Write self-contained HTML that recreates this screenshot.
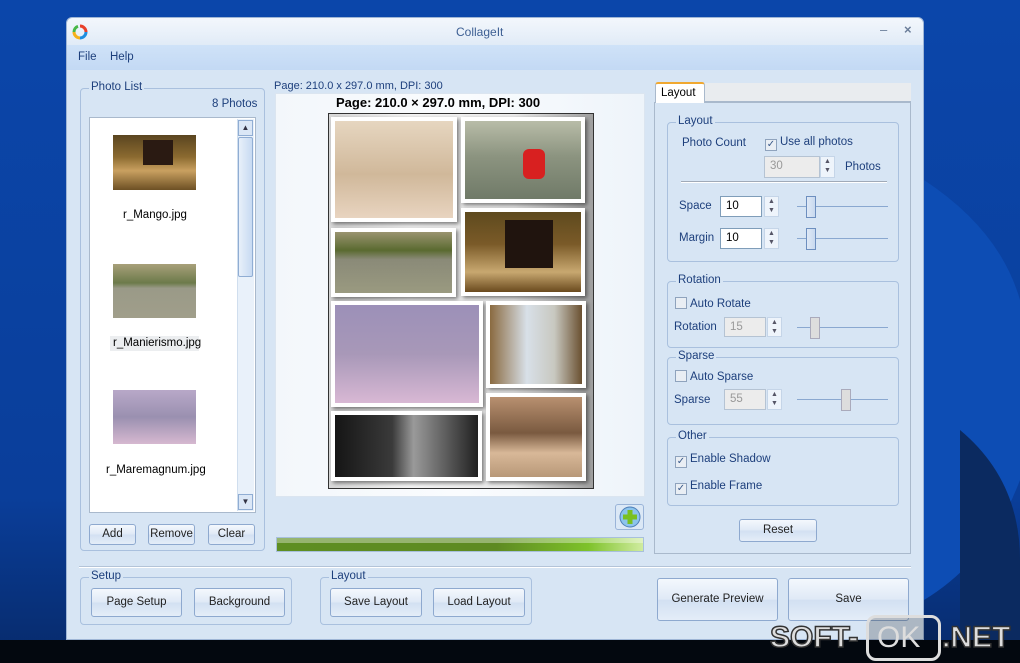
<!DOCTYPE html>
<html><head><meta charset="utf-8"><style>
*{margin:0;padding:0;box-sizing:border-box}
body{width:1020px;height:663px;overflow:hidden;position:relative;font-family:"Liberation Sans",sans-serif;font-size:11.5px;background:#0a3f9e}
.a{position:absolute}
.lbl{color:#1d3f7c}
.btn{position:absolute;border:1px solid #8ea9cf;border-radius:3px;background:linear-gradient(#f4f8fd,#dfe9f6 50%,#d2e0f2 51%,#e4edf8);color:#222;text-align:center;font-size:11.5px}
.grp{position:absolute;border:1px solid #a9c0de;border-radius:4px}
.gt{position:absolute;top:-8px;left:8px;background:#d7e5f4;padding:0 2px;color:#1d3f7c;font-size:11.5px}
.in{position:absolute;background:#fff;border:1px solid #7f9db9;font-size:11.5px;padding:3px 0 0 5px;color:#000}
.dis{background:#ececec;color:#999;border-color:#b5c3d3}
.spin{position:absolute;width:15px;border:1px solid #c5d5e8;background:#eef4fb;font-size:7px;color:#556;text-align:center;line-height:9px}
.cb{display:inline-block;width:12px;height:12px;border:1px solid #8fa3bd;background:#e9eef4;vertical-align:-2px;margin-right:3px;font-size:10px;line-height:10px;text-align:center;color:#3a5a8a}
.trk{position:absolute;height:1px;background:#8aa8d0}
.thumb{position:absolute;width:10px;height:22px;border:1px solid #6d8fbf;background:linear-gradient(90deg,#dfe9f6,#c8d9ef)}
.ph{position:absolute;border:4px solid #fff;box-shadow:2px 2px 4px rgba(0,0,0,.5)}
</style></head><body>
<svg class="a" style="left:0;top:0" width="1020" height="663">
<defs><linearGradient id="bg" x1="0" y1="0" x2="0" y2="1"><stop offset="0" stop-color="#0b46aa"/><stop offset=".75" stop-color="#0a3e9a"/><stop offset="1" stop-color="#072a6a"/></linearGradient></defs>
<rect width="1020" height="663" fill="url(#bg)"/>
<path d="M924 180 Q1000 230 1020 300 L1020 480 Q990 560 924 600Z" fill="#0d4db4"/>
<path d="M960 430 Q1020 480 1020 560 L1020 663 L960 663Z" fill="#0b2a60"/>
<rect x="0" y="640" width="1020" height="23" fill="#03080f"/>
</svg>
<div class="a" style="left:66px;top:17px;width:858px;height:623px;background:#d7e5f4;border:1px solid #9fb6d6;border-radius:6px 6px 0 0"></div>
<div class="a" style="left:67px;top:18px;width:856px;height:27px;border-radius:6px 6px 0 0;background:linear-gradient(#f3f7fc,#e1ebf7)"></div>
<svg class="a" style="left:72px;top:24px" width="16" height="16" viewBox="0 0 16 16"><path d="M8 2 A6 6 0 0 1 14 8" stroke="#e8402a" stroke-width="3" fill="none"/><path d="M14 8 A6 6 0 0 1 8 14" stroke="#1f8ee0" stroke-width="3" fill="none"/><path d="M8 14 A6 6 0 0 1 2 8" stroke="#f5b11a" stroke-width="3" fill="none"/><path d="M2 8 A6 6 0 0 1 6 2.3" stroke="#48b848" stroke-width="3" fill="none"/></svg>
<div class="a" style="left:456px;top:25px;color:#3d5f93;font-size:12px">CollageIt</div>
<div class="a" style="left:880px;top:22px;color:#6a7d99;font-size:13px">–</div>
<div class="a" style="left:904px;top:22px;color:#6a7d99;font-size:13px;font-weight:bold">×</div>
<div class="a" style="left:67px;top:45px;width:856px;height:25px;background:linear-gradient(#cfe2f8,#c3d9f4)"></div>
<div class="a lbl" style="left:78px;top:51px">File</div>
<div class="a lbl" style="left:110px;top:51px">Help</div>

<div class="grp" style="left:80px;top:88px;width:185px;height:463px"><span class="gt">Photo List</span></div>
<div class="a lbl" style="left:212px;top:98px">8 Photos</div>
<div class="a" style="left:89px;top:117px;width:167px;height:396px;background:#fff;border:1px solid #a9b9cc"></div>
<div class="a" style="left:237px;top:119px;width:17px;height:392px;background:#e9f1fa;border-left:1px solid #d0deee"></div>
<div class="a" style="left:238px;top:120px;width:15px;height:16px;border:1px solid #90add3;background:#dbe7f6;font-size:8px;text-align:center;color:#334;line-height:14px">▲</div>
<div class="a" style="left:238px;top:137px;width:15px;height:140px;border:1px solid #90add3;border-radius:2px;background:linear-gradient(90deg,#e8f0fa,#c7daf2)"></div>
<div class="a" style="left:238px;top:494px;width:15px;height:16px;border:1px solid #90add3;background:#dbe7f6;font-size:8px;text-align:center;color:#334;line-height:14px">▼</div>
<div class="a" style="left:113px;top:135px;width:83px;height:55px;background:linear-gradient(#5a4520,#8b6a30 40%,#c9a060 65%,#6d5024)"></div>
<div class="a" style="left:143px;top:140px;width:30px;height:25px;background:#2a1a12"></div>
<div class="a" style="left:123px;top:209px;color:#000">r_Mango.jpg</div>
<div class="a" style="left:113px;top:264px;width:83px;height:54px;background:linear-gradient(#a8a07a,#6c7a4a 35%,#9a9a88 45%,#a09e8a)"></div>
<div class="a" style="left:110px;top:336px;width:89px;height:15px;background:#eceef0"></div>
<div class="a" style="left:113px;top:337px;color:#000">r_Manierismo.jpg</div>
<div class="a" style="left:113px;top:390px;width:83px;height:54px;background:linear-gradient(#b8a8c8,#9a90b0 50%,#d6b8d0)"></div>
<div class="a" style="left:106px;top:464px;color:#000">r_Maremagnum.jpg</div>
<div class="btn" style="left:89px;top:524px;width:47px;height:21px;line-height:19px">Add</div>
<div class="btn" style="left:148px;top:524px;width:47px;height:21px;line-height:19px">Remove</div>
<div class="btn" style="left:208px;top:524px;width:47px;height:21px;line-height:19px">Clear</div>

<div class="a lbl" style="left:274px;top:80px;font-size:11px">Page: 210.0 x 297.0 mm, DPI: 300</div>
<div class="a" style="left:275px;top:93px;width:370px;height:404px;background:linear-gradient(90deg,#f3f7fb,#fafcfe 50%,#eef4fa);border:1px solid #dbe5f0"></div>
<div class="a" style="left:336px;top:95px;font-weight:bold;font-size:13px;color:#000">Page: 210.0 × 297.0 mm, DPI: 300</div>
<div class="a" style="left:328px;top:113px;width:266px;height:376px;border:1px solid #333;background:linear-gradient(90deg,#d8d8d8,#f4f4f4 30%,#ececec 70%,#a0a0a0)"></div>
<div class="ph" style="left:331px;top:117px;width:126px;height:105px;background:linear-gradient(#e6d6c0,#d0b89a 55%,#e8d4c0)"></div>
<div class="ph" style="left:461px;top:117px;width:124px;height:86px;background:linear-gradient(#b8bca8,#8c9480 45%,#707a68)"><div class="a" style="left:58px;top:28px;width:22px;height:30px;background:#d82020;border-radius:6px"></div></div>
<div class="ph" style="left:331px;top:228px;width:125px;height:69px;background:linear-gradient(#9a9470,#5a6a30 30%,#8a8a78 45%,#9a9a80)"></div>
<div class="ph" style="left:461px;top:208px;width:124px;height:88px;background:linear-gradient(#5e4a1e,#7a5a28 40%,#c8a870 75%,#6a4a1e)"><div class="a" style="left:40px;top:8px;width:48px;height:48px;background:#20140e"></div></div>
<div class="ph" style="left:331px;top:301px;width:152px;height:106px;background:linear-gradient(#9c90b8,#a898b8 50%,#d8b8d4)"></div>
<div class="ph" style="left:486px;top:301px;width:100px;height:87px;background:linear-gradient(90deg,#8a6a40,#d8e0e8 40%,#c8c8c0 70%,#6a5030)"></div>
<div class="ph" style="left:331px;top:411px;width:151px;height:70px;background:linear-gradient(90deg,#151515,#3a3a3a 40%,#9a9a9a 55%,#202020)"></div>
<div class="ph" style="left:486px;top:393px;width:100px;height:88px;background:linear-gradient(#b89070,#7a5a40 45%,#d8b898 70%,#b89878)"></div>
<div class="a" style="left:615px;top:504px;width:29px;height:26px;border:1px solid #9ab4d8;border-radius:3px;background:#dbe8f6"></div>
<svg class="a" style="left:619px;top:506px" width="22" height="22" viewBox="0 0 22 22"><circle cx="11" cy="11" r="10" fill="#8cc4ec" stroke="#4f7fb8"/><path d="M11 4v14M4 11h14" stroke="#7ac020" stroke-width="5"/></svg>
<div class="a" style="left:276px;top:537px;width:368px;height:15px;border:1px solid #a8c0dc;background:linear-gradient(90deg,#5e8e22,#5e8a22 60%,#7ec22a 85%,#d0eca0)"></div>
<div class="a" style="left:277px;top:538px;width:366px;height:5px;background:rgba(255,255,255,.35)"></div>

<div class="a" style="left:654px;top:102px;width:257px;height:452px;border:1px solid #a9b9cc;background:#d7e5f4"></div>
<div class="a" style="left:704px;top:83px;width:207px;height:19px;background:#e9ecef;border-bottom:1px solid #a9b9cc"></div>
<div class="a" style="left:655px;top:82px;width:50px;height:21px;background:#fff;border:1px solid #a9b9cc;border-bottom:none;border-top:2px solid #f0a830;border-radius:3px 3px 0 0;padding:3px 0 0 5px;font-size:11.5px;color:#000">Layout</div>
<div class="grp" style="left:667px;top:122px;width:232px;height:140px"><span class="gt">Layout</span></div>
<div class="a lbl" style="left:682px;top:137px">Photo Count</div>
<div class="a lbl" style="left:765px;top:136px"><span class="cb">✓</span>Use all photos</div>
<div class="in dis" style="left:764px;top:156px;width:56px;height:22px">30</div>
<div class="spin" style="left:820px;top:156px;height:22px">▲<br>▼</div>
<div class="a lbl" style="left:845px;top:161px">Photos</div>
<div class="a" style="left:681px;top:181px;width:206px;height:2px;border-top:1px solid #a0aab8;border-bottom:1px solid #fff"></div>
<div class="a lbl" style="left:679px;top:200px">Space</div>
<div class="in" style="left:720px;top:196px;width:42px;height:21px">10</div>
<div class="spin" style="left:764px;top:196px;height:21px">▲<br>▼</div>
<div class="trk" style="left:797px;top:206px;width:91px"></div><div class="thumb" style="left:806px;top:196px"></div>
<div class="a lbl" style="left:679px;top:232px">Margin</div>
<div class="in" style="left:720px;top:228px;width:42px;height:21px">10</div>
<div class="spin" style="left:764px;top:228px;height:21px">▲<br>▼</div>
<div class="trk" style="left:797px;top:238px;width:91px"></div><div class="thumb" style="left:806px;top:228px"></div>

<div class="grp" style="left:667px;top:281px;width:232px;height:67px"><span class="gt">Rotation</span></div>
<div class="a lbl" style="left:675px;top:297px"><span class="cb"></span>Auto Rotate</div>
<div class="a lbl" style="left:674px;top:321px">Rotation</div>
<div class="in dis" style="left:724px;top:317px;width:42px;height:20px">15</div>
<div class="spin" style="left:767px;top:317px;height:20px">▲<br>▼</div>
<div class="trk" style="left:797px;top:327px;width:91px"></div><div class="thumb" style="left:810px;top:317px;border-color:#aab;background:#ddd"></div>

<div class="grp" style="left:667px;top:357px;width:232px;height:68px"><span class="gt">Sparse</span></div>
<div class="a lbl" style="left:675px;top:370px"><span class="cb"></span>Auto Sparse</div>
<div class="a lbl" style="left:674px;top:394px">Sparse</div>
<div class="in dis" style="left:724px;top:389px;width:42px;height:21px">55</div>
<div class="spin" style="left:767px;top:389px;height:21px">▲<br>▼</div>
<div class="trk" style="left:797px;top:399px;width:91px"></div><div class="thumb" style="left:841px;top:389px;border-color:#aab;background:#ddd"></div>

<div class="grp" style="left:667px;top:437px;width:232px;height:69px"><span class="gt">Other</span></div>
<div class="a lbl" style="left:675px;top:453px"><span class="cb">✓</span>Enable Shadow</div>
<div class="a lbl" style="left:675px;top:480px"><span class="cb">✓</span>Enable Frame</div>
<div class="btn" style="left:739px;top:519px;width:78px;height:23px;line-height:21px">Reset</div>

<div class="a" style="left:79px;top:566px;width:832px;height:2px;border-top:1px solid #b4c4d8;border-bottom:1px solid #fff"></div>
<div class="grp" style="left:80px;top:577px;width:212px;height:48px"><span class="gt">Setup</span></div>
<div class="btn" style="left:91px;top:588px;width:91px;height:29px;line-height:27px">Page Setup</div>
<div class="btn" style="left:194px;top:588px;width:91px;height:29px;line-height:27px">Background</div>
<div class="grp" style="left:320px;top:577px;width:212px;height:48px"><span class="gt">Layout</span></div>
<div class="btn" style="left:330px;top:588px;width:92px;height:29px;line-height:27px">Save Layout</div>
<div class="btn" style="left:433px;top:588px;width:92px;height:29px;line-height:27px">Load Layout</div>
<div class="btn" style="left:657px;top:578px;width:121px;height:43px;line-height:41px">Generate Preview</div>
<div class="btn" style="left:788px;top:578px;width:121px;height:43px;line-height:41px">Save</div>

<div class="a" style="left:770px;top:618px;font-size:30px;color:#ddd;font-weight:bold;-webkit-text-stroke:1.5px #333;line-height:40px">SOFT-</div>
<div class="a" style="left:866px;top:615px;width:75px;height:46px;border:3px solid #ddd;border-radius:10px;background:rgba(0,0,0,.2)"></div>
<div class="a" style="left:877px;top:618px;font-size:30px;color:#ddd;line-height:40px">OK</div>
<div class="a" style="left:942px;top:618px;font-size:30px;color:#ddd;font-weight:bold;-webkit-text-stroke:1.5px #333;line-height:40px">.NET</div>
</body></html>
